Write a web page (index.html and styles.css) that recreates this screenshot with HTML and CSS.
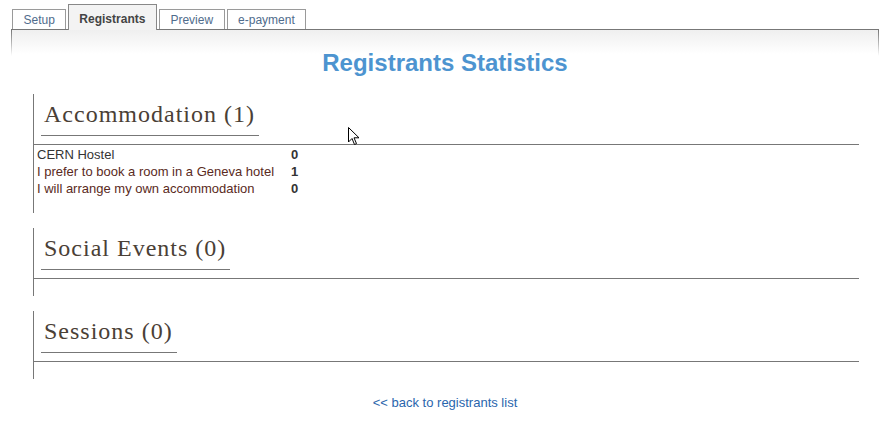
FILE: index.html
```html
<!DOCTYPE html>
<html>
<head>
<meta charset="utf-8">
<link rel="stylesheet" href="styles.css">
</head>
<body>
<div class="tabs">
  <div class="tab">Setup</div>
  <div class="tab active">Registrants</div>
  <div class="tab">Preview</div>
  <div class="tab">e-payment</div>
</div>
<div class="panel">
  <h1 class="title">Registrants Statistics</h1>

  <div class="section">
    <div class="section-head"><span class="section-title">Accommodation (1)</span></div>
    <div class="section-body">
      <div class="stats">
        <span class="label first">CERN Hostel</span><span class="num">0</span>
        <span class="label">I prefer to book a room in a Geneva hotel</span><span class="num">1</span>
        <span class="label">I will arrange my own accommodation</span><span class="num">0</span>
      </div>
    </div>
  </div>

  <div class="section">
    <div class="section-head"><span class="section-title">Social Events (0)</span></div>
    <div class="section-body empty"></div>
  </div>

  <div class="section last">
    <div class="section-head"><span class="section-title">Sessions (0)</span></div>
    <div class="section-body empty"></div>
  </div>

  <div class="back"><a href="#">&lt;&lt; back to registrants list</a></div>
</div>
<svg class="cursor" width="12" height="19" viewBox="0 0 12 19"><path d="M0.5 0.5 L0.5 15 L4 11.5 L6.5 17.5 L8.5 16.6 L6 10.8 L11 10.8 Z" fill="#fff" stroke="#000" stroke-width="1" stroke-linejoin="miter"/></svg>
</body>
</html>
```

FILE: styles.css
```css
html, body {
  margin: 0;
  padding: 0;
  background: #fff;
}
body {
  font-family: "Liberation Sans", Arial, sans-serif;
  font-size: 13px;
  color: #333;
  position: relative;
  width: 891px;
  height: 438px;
  overflow: hidden;
}
.tabs {
  display: flex;
  align-items: flex-end;
  gap: 2px;
  padding: 4px 0 0 12px;
  height: 25px;
  position: relative;
  z-index: 2;
}
.tab {
  height: 19px;
  line-height: 20px;
  padding: 0 10.5px;
  border: 1px solid #9a9a9a;
  border-bottom: none;
  background: #fff;
  font-size: 12px;
  color: #4f6c8c;
}
.tab:first-child {
  padding-right: 10px;
}
.tab.active {
  height: 25px;
  line-height: 28px;
  border-color: #888;
  background: #f3f3f3;
  color: #444;
  font-weight: bold;
  margin-bottom: -1px;
}
.panel {
  margin: 0 12px 0 11px;
  border-top: 1px solid #777;
  padding: 19px 0 0;
  background:
    linear-gradient(#777, rgba(119,119,119,0)) left top / 1px 26px no-repeat,
    linear-gradient(#777, rgba(119,119,119,0)) right top / 1px 26px no-repeat,
    linear-gradient(#efefef, #fff 24px) left top / 100% 30px no-repeat;
  position: relative;
  z-index: 1;
}
.title {
  margin: 0 0 17px;
  text-align: center;
  font-size: 24px;
  line-height: 28px;
  font-weight: bold;
  color: #4d94d0;
}
.section {
  border-left: 1px solid #777;
  margin: 0 20px 15px 22px;
}
.section.last {
  margin-bottom: 15px;
}
.section-head {
  border-bottom: 1px solid #777;
  padding: 6px 0 8px 7px;
}
.section-title {
  display: inline-block;
  border-bottom: 1px solid #777;
  padding: 0 4px 7px 3px;
  font-family: "Liberation Serif", "Times New Roman", serif;
  font-size: 24px;
  line-height: 28px;
  letter-spacing: 1px;
  color: #4a4036;
}
.section-body {
  padding: 1px 0 16px 3px;
}
.section-body.empty {
  padding: 0 0 17px;
}
.stats {
  display: grid;
  grid-template-columns: max-content max-content;
  column-gap: 17px;
  line-height: 17px;
}
.label {
  color: #5a2a22;
}
.label.first {
  color: #333;
}
.num {
  font-weight: bold;
  color: #333;
}
.back {
  text-align: center;
  line-height: 17px;
}
.back a {
  color: #2a66ad;
  text-decoration: none;
}
.cursor {
  position: absolute;
  left: 348px;
  top: 127px;
  z-index: 5;
}
```
